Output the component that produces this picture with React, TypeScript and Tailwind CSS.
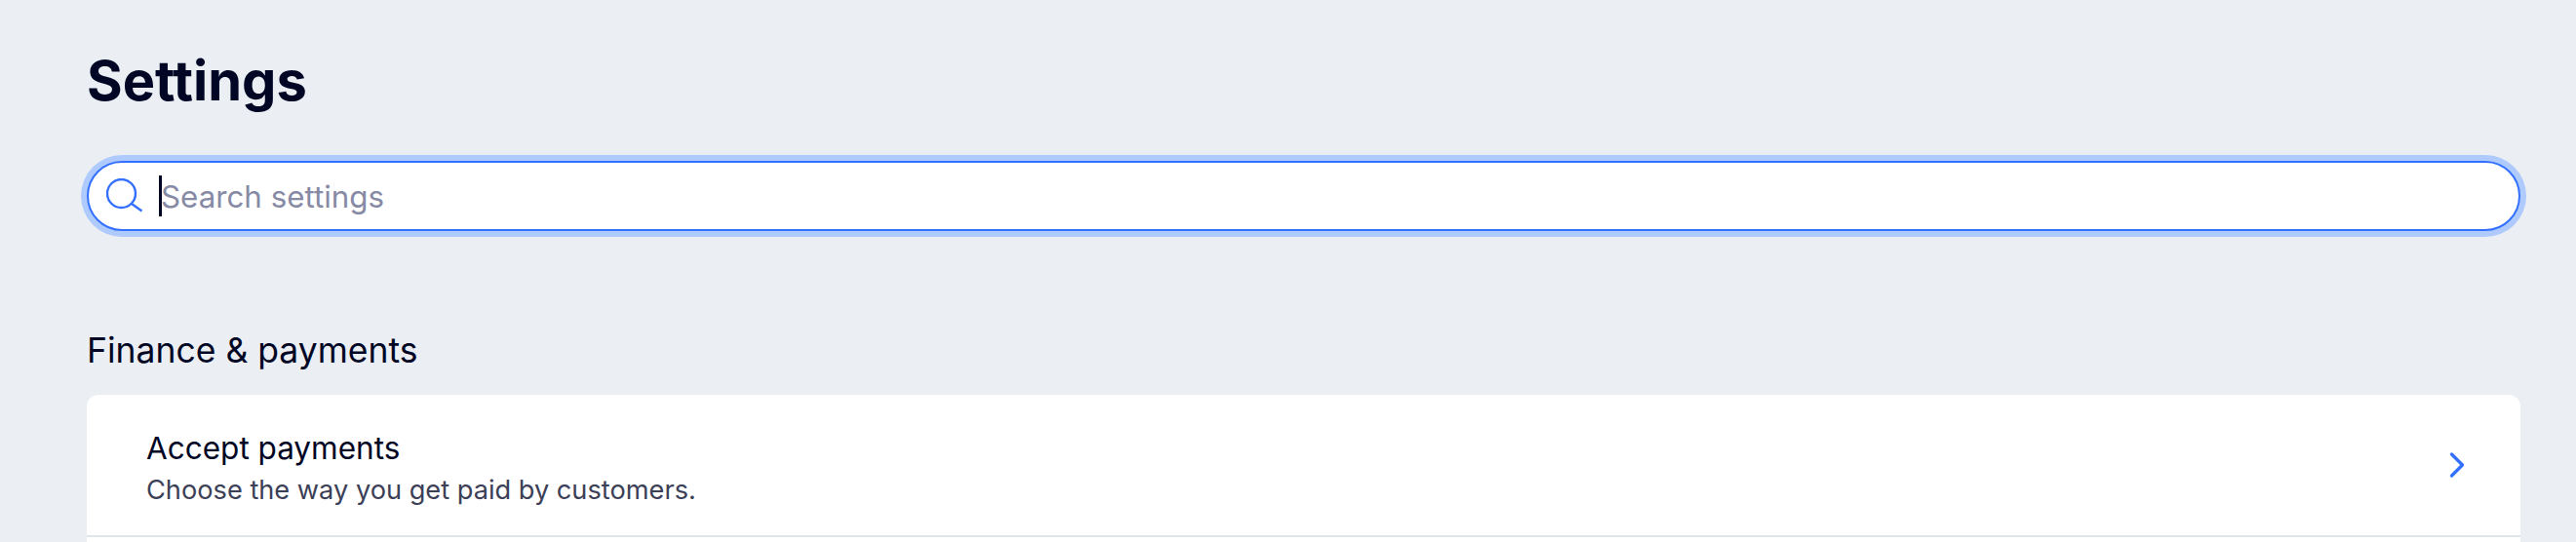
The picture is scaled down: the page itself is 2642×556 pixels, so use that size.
import { ChevronRight } from 'lucide-react'

function SearchIcon() {
  return (
    <svg viewBox="0 0 38 36" className="h-[36px] w-[38px] shrink-0" fill="none" stroke="#3370ff" strokeWidth="2.4">
      <circle cx="15.5" cy="15.5" r="14.5" />
      <path d="M26 26L36.5 33.5" />
    </svg>
  )
}

function SettingsRow({ title, description }: { title: string; description: string }) {
  return (
    <div className="flex h-[146px] items-center justify-between border-b-2 border-[#dfe5eb] pl-[61px] pr-[43px]">
      <div className="min-w-0 pt-[8px]">
        <p className="text-[31.5px] leading-[40px] font-normal text-[#000624]">{title}</p>
        <p className="mt-[4px] text-[27.2px] leading-[38px] text-[#3b4057]">{description}</p>
      </div>
      <ChevronRight className="h-[44px] w-[44px] shrink-0 text-[#3370ff]" strokeWidth={1.8} />
    </div>
  )
}

export default function App() {
  return (
    <div className="h-[556px] overflow-hidden bg-[#ebeef3] pl-[89px] pr-[57px] font-['Inter',sans-serif]">
      <h1 className="pt-[48px] text-[56px] leading-[70px] font-bold text-[#000624]">Settings</h1>

      <div className="mt-[47px] flex h-[72px] items-center rounded-full border-2 border-[#3370ff] bg-white pl-[18px] pr-6 shadow-[0_0_0_6px_#afcafc]">
        <SearchIcon />
        <span className="ml-[16px] h-[42px] w-[3px] shrink-0 bg-[#000624]" />
        <input
          readOnly
          placeholder="Search settings"
          className="-ml-[1px] min-w-0 flex-1 bg-transparent pt-[3px] text-[31.3px] text-[#000624] outline-none placeholder:text-[#868aa5]"
        />
      </div>

      <h2 className="mt-[101px] text-[35.5px] leading-[44px] font-normal text-[#000624]">Finance &amp; payments</h2>

      <div className="mt-[23px] overflow-hidden rounded-t-[12px] bg-white">
        <SettingsRow title="Accept payments" description="Choose the way you get paid by customers." />
        <div className="h-[146px]" />
      </div>
    </div>
  )
}
